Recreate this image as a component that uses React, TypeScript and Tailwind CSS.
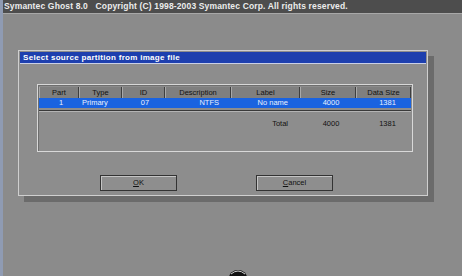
const columns = [
  { key: "part", label: "Part", width: "w-[40px]" },
  { key: "type", label: "Type", width: "w-[43px]" },
  { key: "id", label: "ID", width: "w-[43px]" },
  { key: "desc", label: "Description", width: "w-[66px]" },
  { key: "label", label: "Label", width: "w-[69px]" },
  { key: "size", label: "Size", width: "w-[56px]" },
  { key: "data", label: "Data Size", width: "w-[55px]" },
];

export default function App() {
  return (
    <div
      className="relative w-[462px] h-[276px] overflow-hidden bg-[#8b8b8b] border-l-[3px] border-[#8f9bb3]"
      style={{ fontFamily: '"Liberation Sans", Arial, sans-serif' }}
    >
      {/* top status line */}
      <div className="h-[14px] bg-[#4d4d4d] border-b border-[#a8a8a8] flex items-center pl-[1px] text-[8.5px] tracking-[0.15px] font-bold text-[#ececec] whitespace-pre">
        Symantec Ghost 8.0{"   "}Copyright (C) 1998-2003 Symantec Corp. All rights reserved.
      </div>

      {/* dialog */}
      <div className="ml-[15px] mt-[36px] w-[410px] h-[146px] bg-[#8d8d8d] border border-[#cfcfcf] shadow-[6px_6px_0_#6b6b6b] flex flex-col p-[1px]">
        <div className="h-[12px] bg-[#1d3fae] border-b border-[#c9cfe6] flex items-center pl-[3px] text-[8px] font-bold text-white tracking-[0.3px]">
          Select source partition from image file
        </div>

        <div className="ml-[17px] mt-[20px] w-[376px] h-[68px] border border-[#d8d8d8] shadow-[inset_1px_1px_0_#6e6e6e] p-[1px] text-[7.5px]">
          <div className="flex h-[11px] mt-[1px] text-[#111]">
            {columns.map((c) => (
              <div
                key={c.key}
                className={`${c.width} flex items-center justify-center bg-[#7f7f7f] border-r border-[#3e3e3e] border-l border-l-[#a9a9a9]`}
              >
                {c.label}
              </div>
            ))}
          </div>
          <div className="flex h-[10px] bg-[#1a63e0] text-[#e8f0ff] items-center">
            <div className="w-[40px] text-center pl-[4px]">1</div>
            <div className="w-[43px] pl-[3px]">Primary</div>
            <div className="w-[43px] text-center pl-[3px]">07</div>
            <div className="w-[66px] text-right pr-[12px]">NTFS</div>
            <div className="w-[69px] text-right pr-[12px]">No name</div>
            <div className="w-[56px] text-center pl-[6px]">4000</div>
            <div className="w-[55px] text-center pl-[8px]">1381</div>
          </div>
          <div className="mt-[2px] h-[2px] border-t border-[#3a3a3a] border-b border-b-[#b4b4b4]" />
          <div className="flex h-[10px] mt-[7px] text-[#111] items-center">
            <div className="w-[192px]" />
            <div className="w-[69px] text-right pr-[12px]">Total</div>
            <div className="w-[56px] text-center pl-[6px]">4000</div>
            <div className="w-[55px] text-center pl-[8px]">1381</div>
          </div>
        </div>

        <div className="flex ml-[80px] mt-[23px] gap-[79px] text-[7.5px] text-[#111]">
          <button className="w-[77px] h-[16px] bg-[#8e8e8e] border border-[#333] shadow-[inset_1px_1px_0_#c4c4c4] flex items-center justify-center">
            <span>
              <span className="underline">O</span>K
            </span>
          </button>
          <button className="w-[77px] h-[16px] bg-[#8e8e8e] border border-[#333] shadow-[inset_1px_1px_0_#c4c4c4] flex items-center justify-center">
            <span>
              <span className="underline">C</span>ancel
            </span>
          </button>
        </div>
      </div>

      {/* ghost logo peeking at bottom */}
      <svg className="absolute left-[222px] top-[262px]" width="26" height="16" viewBox="0 0 26 16">
        <ellipse cx="13" cy="16" rx="9" ry="8" fill="#101010" />
        <path d="M6 12 Q13 6 20 12" stroke="#cfcfcf" strokeWidth="1" fill="none" />
      </svg>
    </div>
  );
}
